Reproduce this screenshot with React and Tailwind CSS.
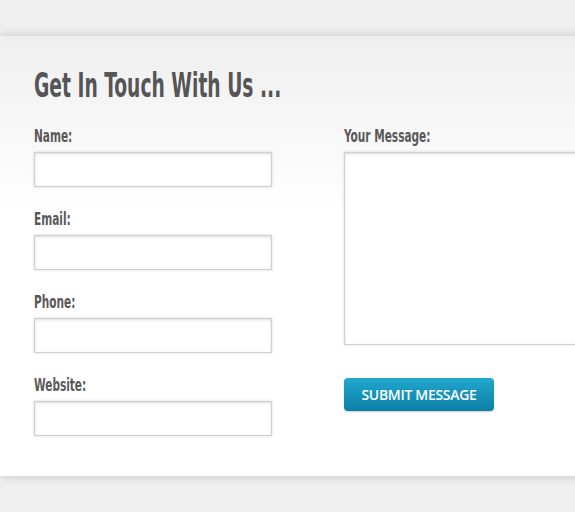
const fields = ['Name:', 'Email:', 'Phone:', 'Website:'];

const condensed = { fontFamily: '"DejaVu Sans Condensed", "Liberation Sans", sans-serif' };

function Label({ children }) {
  return (
    <label className="block h-[28px] leading-[24px]">
      <span
        className="inline-block origin-left scale-x-[0.67] text-[17.5px] font-bold text-[#595959]"
        style={condensed}
      >
        {children}
      </span>
    </label>
  );
}

function Field({ label }) {
  return (
    <div className="flex flex-col">
      <Label>{label}</Label>
      <input
        type="text"
        className="h-[35px] w-[238px] border border-[#d0d0d0] bg-white shadow-[inset_0_1px_3px_rgba(0,0,0,0.14),0_0_3px_rgba(0,0,0,0.14)] outline-none"
      />
    </div>
  );
}

export default function App() {
  return (
    <div className="h-[512px] w-[575px] overflow-hidden bg-[#efefef] pt-[36px]">
      <div className="h-[440px] w-[680px] bg-gradient-to-b from-[#efefef] via-white via-40% to-white pl-[34px] pt-[30px] shadow-[0_0_10px_rgba(0,0,0,0.18)]">
        <h1 className="h-[40px] leading-[40px]">
          <span
            className="inline-block origin-left scale-x-[0.63] text-[33px] font-bold text-[#555]"
            style={condensed}
          >
            Get In Touch With Us ...
          </span>
        </h1>
        <div className="mt-[18px] flex gap-[72px]">
          <div className="flex flex-col gap-[20px]">
            {fields.map((f) => (
              <Field key={f} label={f} />
            ))}
          </div>
          <div className="flex flex-col">
            <Label>Your Message:</Label>
            <textarea className="h-[193px] w-[280px] resize-none border border-[#d0d0d0] bg-white shadow-[inset_0_1px_3px_rgba(0,0,0,0.14),0_0_3px_rgba(0,0,0,0.14)] outline-none" />
            <button
              className="mt-[33px] h-[33px] w-[150px] rounded-[4px] bg-gradient-to-b from-[#21a7cd] to-[#0c80a6] text-[14px] font-semibold tracking-[-0.3px] text-white shadow-[0_1px_2px_rgba(0,0,0,0.2)]"
              style={{ fontFamily: '"Open Sans", "DejaVu Sans", sans-serif' }}
            >
              SUBMIT MESSAGE
            </button>
          </div>
        </div>
      </div>
    </div>
  );
}
